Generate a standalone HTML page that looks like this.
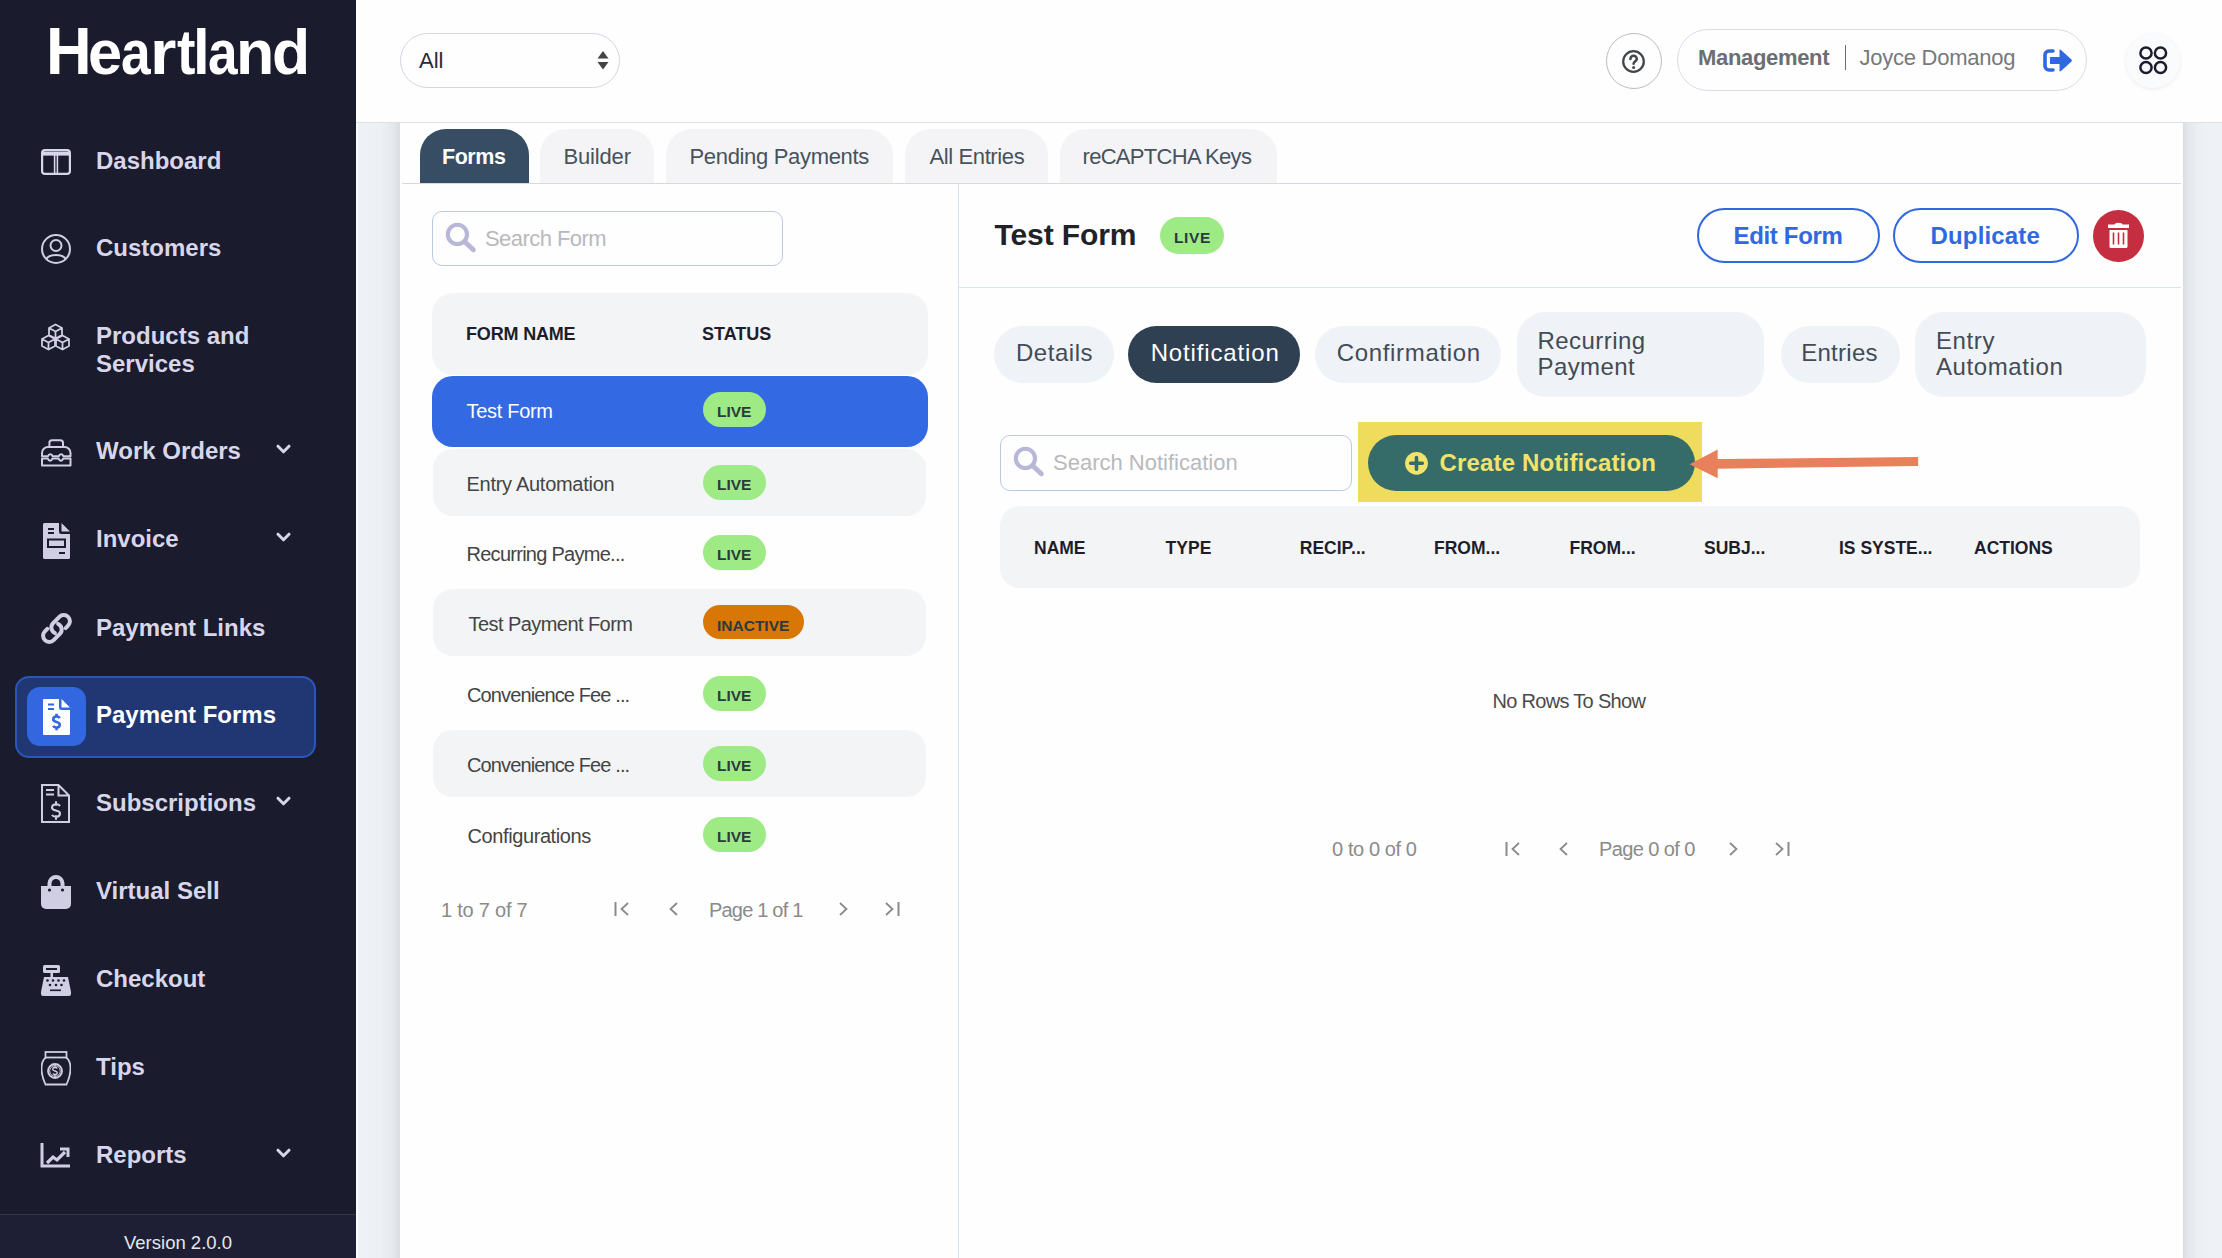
<!DOCTYPE html>
<html><head><meta charset="utf-8">
<style>
*{box-sizing:border-box;margin:0;padding:0}
html,body{width:2222px;height:1258px;overflow:hidden;background:#eef1f6;font-family:"Liberation Sans",sans-serif}
.abs{position:absolute}
.t{white-space:nowrap}
</style></head><body>

<div class="abs" style="left:356px;top:122px;width:44px;height:1136px;background:linear-gradient(to right,#fbfcfd 0,#fbfcfd 4%,#eef1f6 6%,#edf0f5 55%,#e4e7eb 85%,#d9dce0 100%)"></div>
<div class="abs" style="left:2183px;top:122px;width:39px;height:1136px;background:linear-gradient(to right,#d9dce1 0,#e3e6eb 12%,#ebeef3 35%,#eef1f6 60%)"></div>
<div class="abs" style="left:356px;top:0px;width:1866px;height:123px;background:#fefefe;border-bottom:1px solid #dde1e6"></div>
<div class="abs" style="left:400px;top:123px;width:1783px;height:1135px;background:#fefefe"></div>
<div class="abs" style="left:0px;top:0px;width:356px;height:1258px;background:#1a1b2d"></div>
<div class="t abs" style="left:45.92px;top:21.45px;font-size:63.5px;line-height:63.5px;color:#ffffff;font-weight:bold;transform:scale(0.995,1.055);transform-origin:0 53.75px">H</div>
<div class="t abs" style="left:87.98px;top:21.45px;font-size:63.5px;line-height:63.5px;color:#ffffff;font-weight:bold;transform:scale(0.967,1.0);transform-origin:0 53.75px">e</div>
<div class="t abs" style="left:120.90px;top:21.45px;font-size:63.5px;line-height:63.5px;color:#ffffff;font-weight:bold;transform:scale(0.840,1.0);transform-origin:0 53.75px">a</div>
<div class="t abs" style="left:150.22px;top:21.45px;font-size:63.5px;line-height:63.5px;color:#ffffff;font-weight:bold;transform:scale(1.067,1.0);transform-origin:0 53.75px">r</div>
<div class="t abs" style="left:176.60px;top:21.45px;font-size:63.5px;line-height:63.5px;color:#ffffff;font-weight:bold;transform:scale(0.872,1.0);transform-origin:0 53.75px">t</div>
<div class="t abs" style="left:193.35px;top:21.45px;font-size:63.5px;line-height:63.5px;color:#ffffff;font-weight:bold;transform:scale(0.943,1.0);transform-origin:0 53.75px">l</div>
<div class="t abs" style="left:207.91px;top:21.45px;font-size:63.5px;line-height:63.5px;color:#ffffff;font-weight:bold;transform:scale(0.837,1.0);transform-origin:0 53.75px">a</div>
<div class="t abs" style="left:236.25px;top:21.45px;font-size:63.5px;line-height:63.5px;color:#ffffff;font-weight:bold;transform:scale(0.987,1.0);transform-origin:0 53.75px">n</div>
<div class="t abs" style="left:271.84px;top:21.45px;font-size:63.5px;line-height:63.5px;color:#ffffff;font-weight:bold;transform:scale(0.984,1.0);transform-origin:0 53.75px">d</div>
<svg class="abs" style="left:41px;top:149px" width="30" height="26" viewBox="0 0 30 26" ><g fill="none" stroke="#d8d6ea" stroke-width="2.2"><rect x="1.1" y="1.1" width="27.8" height="23.8" rx="3"/><path d="M1 4.6H29" stroke-width="4"/><path d="M13.6 6V25M16.4 6V25" stroke-width="1.6"/></g></svg>
<div class="t abs" style="left:96.00px;top:148.68px;font-size:24px;line-height:24px;color:#d8d6ea;font-weight:bold;">Dashboard</div>
<svg class="abs" style="left:41px;top:234px" width="30" height="30" viewBox="0 0 30 30" ><g fill="none" stroke="#d0cee3" stroke-width="2"><circle cx="15" cy="15" r="14"/><circle cx="15" cy="11.5" r="5.5"/><path d="M5 25.5C8 19.5 22 19.5 25 25.5"/></g></svg>
<div class="t abs" style="left:96.00px;top:236.28px;font-size:24px;line-height:24px;color:#d8d6ea;font-weight:bold;">Customers</div>
<svg class="abs" style="left:40px;top:323px" width="31" height="28" viewBox="0 0 31 28" ><g fill="none" stroke="#d0cee3" stroke-width="1.8" stroke-linejoin="round"><path d="M15.5 1.5L22 5V12L15.5 15.5L9 12V5Z M9 5L15.5 8.5L22 5 M15.5 8.5V15.5"/><path d="M8.5 12.5L15 16V23L8.5 26.5L2 23V16Z M2 16L8.5 19.5L15 16 M8.5 19.5V26.5"/><path d="M22.5 12.5L29 16V23L22.5 26.5L16 23V16Z M16 16L22.5 19.5L29 16 M22.5 19.5V26.5"/></g></svg>
<div class="t abs" style="left:96.00px;top:324.28px;font-size:24px;line-height:24px;color:#d8d6ea;font-weight:bold;">Products and</div>
<div class="t abs" style="left:96.00px;top:351.98px;font-size:24px;line-height:24px;color:#d8d6ea;font-weight:bold;">Services</div>
<svg class="abs" style="left:41px;top:439px" width="31" height="28" viewBox="0 0 31 28" ><g fill="none" stroke="#d0cee3" stroke-width="2" stroke-linejoin="round"><path d="M8.4 8.2V3.8a2.6 2.6 0 0 1 2.6-2.6h8.4a2.6 2.6 0 0 1 2.6 2.6V8.2"/><path d="M1 17.3V14a6 6 0 0 1 6-6H23.5a6 6 0 0 1 6 6V17.3H22.4c-0.7-2.7-3.9-2.7-4.6 0H11.6c-0.7-2.7-3.9-2.7-4.6 0Z"/><path d="M1 19.6H6.8c0.7 2.7 3.9 2.7 4.6 0H17.6c0.7 2.7 3.9 2.7 4.6 0H29.5V26.5H1Z"/></g></svg>
<div class="t abs" style="left:96.00px;top:438.68px;font-size:24px;line-height:24px;color:#d8d6ea;font-weight:bold;">Work Orders</div>
<svg class="abs" style="left:276px;top:444px" width="15" height="10" viewBox="0 0 15 10" ><path d="M2 2.2L7.5 7.8L13 2.2" fill="none" stroke="#d8d6ea" stroke-width="3" stroke-linecap="round" stroke-linejoin="round"/></svg>
<svg class="abs" style="left:43px;top:523px" width="27" height="36" viewBox="0 0 27 36" ><path fill="#d0cee3" d="M0 1.5Q0 0 1.5 0H16V8.5a2.5 2.5 0 0 0 2.5 2.5H27V34.5Q27 36 25.5 36H1.5Q0 36 0 34.5Z M18.5 0L27 8.5H18.5Z"/><path stroke="#1a1b2d" stroke-width="2" fill="none" d="M5 6H11M5 10H11M16 30H22"/><rect x="5" y="16.5" width="17" height="7.5" fill="none" stroke="#1a1b2d" stroke-width="2"/></svg>
<div class="t abs" style="left:96.00px;top:527.18px;font-size:24px;line-height:24px;color:#d8d6ea;font-weight:bold;">Invoice</div>
<svg class="abs" style="left:276px;top:532px" width="15" height="10" viewBox="0 0 15 10" ><path d="M2 2.2L7.5 7.8L13 2.2" fill="none" stroke="#d8d6ea" stroke-width="3" stroke-linecap="round" stroke-linejoin="round"/></svg>
<svg class="abs" style="left:39.5px;top:612px" width="33" height="33" viewBox="0 0 24 24"><path fill="none" stroke="#d0cee3" stroke-width="2.9" stroke-linecap="round" stroke-linejoin="round" d="M13.19 8.688a4.5 4.5 0 0 1 1.242 7.244l-4.5 4.5a4.5 4.5 0 0 1-6.364-6.364l1.757-1.757m13.35-.622 1.757-1.757a4.5 4.5 0 0 0-6.364-6.364l-4.5 4.5a4.5 4.5 0 0 0 1.242 7.244"/></svg>
<div class="t abs" style="left:96.00px;top:615.68px;font-size:24px;line-height:24px;color:#d8d6ea;font-weight:bold;">Payment Links</div>
<div class="abs" style="left:15px;top:675.5px;width:301px;height:82.0px;background:#213773;border:2px solid #2a55bd;border-radius:14px"></div>
<div class="abs" style="left:27px;top:687px;width:59px;height:59px;background:#3267e0;border-radius:13px"></div>
<svg class="abs" style="left:42.5px;top:698.5px" width="27" height="36" viewBox="0 0 27 36" ><path fill="#fff" d="M0 1Q0 0 1 0H16V8.5a2.5 2.5 0 0 0 2.5 2.5H27V35Q27 36 26 36H1Q0 36 0 35Z M18.5 0L27 8.5H18.5Z"/><path stroke="#3267e0" stroke-width="2.2" fill="none" d="M5 5.5H11M5 10H11"/><path fill="none" stroke="#3267e0" stroke-width="2.6" stroke-linecap="butt" d="M16.75 19.15C15.78 17.05 10.25 16.35 10.25 20.55C10.25 23.70 16.75 22.30 16.75 25.45C16.75 29.65 11.22 28.95 10.25 26.85M13.50 14.80V18.80M13.50 27.20V31.20"/></svg>
<div class="t abs" style="left:96.00px;top:703.18px;font-size:24px;line-height:24px;color:#ffffff;font-weight:bold;">Payment Forms</div>
<svg class="abs" style="left:41px;top:784px" width="29" height="39" viewBox="0 0 29 39" ><g fill="none" stroke="#d0cee3" stroke-width="2"><path d="M1 1H17.5L28 11.5V38H1Z M17.5 1V11.5H28"/><path d="M5 6H13M5 10.5H13" stroke-width="2.2"/></g><path fill="none" stroke="#d0cee3" stroke-width="2.1" stroke-linecap="butt" d="M19.00 22.10C17.80 19.70 11.00 18.90 11.00 23.70C11.00 27.30 19.00 25.70 19.00 29.30C19.00 34.10 12.20 33.30 11.00 30.90M15.00 17.30V21.70M15.00 31.30V35.70"/></svg>
<div class="t abs" style="left:96.00px;top:791.18px;font-size:24px;line-height:24px;color:#d8d6ea;font-weight:bold;">Subscriptions</div>
<svg class="abs" style="left:276px;top:796px" width="15" height="10" viewBox="0 0 15 10" ><path d="M2 2.2L7.5 7.8L13 2.2" fill="none" stroke="#d8d6ea" stroke-width="3" stroke-linecap="round" stroke-linejoin="round"/></svg>
<svg class="abs" style="left:41px;top:875px" width="30" height="34" viewBox="0 0 30 34" ><path d="M8.5 12V8.5a6.5 6.5 0 0 1 13 0V12" fill="none" stroke="#d0cee3" stroke-width="4"/><path fill="#d0cee3" d="M0 11H30V29a5 5 0 0 1-5 5H5a5 5 0 0 1-5-5Z"/><circle cx="8.5" cy="15" r="1.6" fill="#1a1b2d"/><circle cx="21.5" cy="15" r="1.6" fill="#1a1b2d"/></svg>
<div class="t abs" style="left:96.00px;top:879.18px;font-size:24px;line-height:24px;color:#d8d6ea;font-weight:bold;">Virtual Sell</div>
<svg class="abs" style="left:41px;top:965px" width="30" height="31" viewBox="0 0 30 31" ><rect x="2" y="0" width="17" height="8" rx="1.5" fill="#d0cee3"/><rect x="5" y="3" width="11" height="2" fill="#1a1b2d"/><rect x="9.5" y="8" width="2.5" height="5" fill="#d0cee3"/><path fill="#d0cee3" d="M3 12H27L30 27V29a2 2 0 0 1-2 2H2a2 2 0 0 1-2-2V27Z"/><g fill="#1a1b2d"><circle cx="6.5" cy="15.5" r="1.3"/><circle cx="12" cy="15.5" r="1.3"/><circle cx="17.5" cy="15.5" r="1.3"/><circle cx="23" cy="15.5" r="1.3"/><circle cx="9" cy="20" r="1.3"/><circle cx="15" cy="20" r="1.3"/><circle cx="20.5" cy="20" r="1.3"/><rect x="9" y="24.5" width="11" height="1.6"/></g></svg>
<div class="t abs" style="left:96.00px;top:967.18px;font-size:24px;line-height:24px;color:#d8d6ea;font-weight:bold;">Checkout</div>
<svg class="abs" style="left:41px;top:1051px" width="30" height="35" viewBox="0 0 30 35" ><g fill="none" stroke="#d0cee3" stroke-width="1.8"><rect x="4.5" y="1" width="21" height="5.5"/><path d="M5 6.5C1 9 0.5 13 0.5 17.5C0.5 23 2 28 4.5 33.5H25.5C28 28 29.5 23 29.5 17.5C29.5 13 29 9 25 6.5"/><circle cx="14" cy="20" r="7"/><circle cx="14" cy="20" r="5.3" stroke-width="1"/></g><path fill="none" stroke="#d0cee3" stroke-width="1.4" stroke-linecap="butt" d="M16.25 17.52C15.57 16.18 11.75 15.73 11.75 18.43C11.75 20.45 16.25 19.55 16.25 21.57C16.25 24.27 12.43 23.82 11.75 22.48M14.00 14.30V17.30M14.00 22.70V25.70"/></svg>
<div class="t abs" style="left:96.00px;top:1055.18px;font-size:24px;line-height:24px;color:#d8d6ea;font-weight:bold;">Tips</div>
<svg class="abs" style="left:40px;top:1143px" width="31" height="25" viewBox="0 0 31 25" ><g fill="none" stroke="#d0cee3" stroke-width="3"><path d="M2 0V23H30"/><path d="M7 20L13 14L17 17L25 9" stroke-width="3.2"/><path d="M20 6H28V14"/></g></svg>
<div class="t abs" style="left:96.00px;top:1143.18px;font-size:24px;line-height:24px;color:#d8d6ea;font-weight:bold;">Reports</div>
<svg class="abs" style="left:276px;top:1148px" width="15" height="10" viewBox="0 0 15 10" ><path d="M2 2.2L7.5 7.8L13 2.2" fill="none" stroke="#d8d6ea" stroke-width="3" stroke-linecap="round" stroke-linejoin="round"/></svg>
<div class="abs" style="left:0px;top:1214px;width:356px;height:44px;background:#1e1f34;border-top:1px solid #36383f"></div>
<div class="t abs" style="left:0;top:1233.5px;width:356px;text-align:center;font-size:18.5px;line-height:18.5px;color:#e6e6ef">Version 2.0.0</div>
<div class="abs" style="left:400px;top:33px;width:220px;height:55px;border:1.5px solid #d6d4e7;border-radius:28px;background:#fefefe"></div>
<div class="t abs" style="left:419.00px;top:50.38px;font-size:22px;line-height:22px;color:#2b2b35;font-weight:normal;">All</div>
<svg class="abs" style="left:597px;top:50px" width="12" height="20" viewBox="0 0 12 20" ><path fill="#444" d="M0.5 8.5L6 1L11.5 8.5Z M0.5 12L11.5 12L6 19.5Z"/></svg>
<div class="abs" style="left:1606px;top:32.5px;width:56px;height:56.0px;border:1.8px solid #b9bdc0;border-radius:50%"></div>
<svg class="abs" style="left:1621px;top:49px" width="25" height="25" viewBox="0 0 25 25" ><circle cx="12.5" cy="12.5" r="10.3" fill="none" stroke="#41464a" stroke-width="2.3"/><path d="M9.4 10a3.2 3.2 0 0 1 6.4 0c0 2.2-3.2 2.4-3.2 4.8" fill="none" stroke="#41464a" stroke-width="2.5" stroke-linecap="round"/><circle cx="12.6" cy="18.4" r="1.5" fill="#41464a"/></svg>
<div class="abs" style="left:1677px;top:29px;width:410px;height:62px;border:1.5px solid #dcdaea;border-radius:31px"></div>
<div class="t abs" style="left:1698.00px;top:47.38px;font-size:22px;line-height:22px;color:#6b6e72;font-weight:bold;letter-spacing:-0.33px;">Management</div>
<div class="abs" style="left:1844.5px;top:45px;width:1.5px;height:25px;background:#6a6d72"></div>
<div class="t abs" style="left:1859.50px;top:47.38px;font-size:22px;line-height:22px;color:#76797c;font-weight:normal;letter-spacing:-0.25px;">Joyce Domanog</div>
<svg class="abs" style="left:2042px;top:48px" width="31" height="25" viewBox="0 0 31 25" ><path d="M11 3H7a4 4 0 0 0-4 4V18a4 4 0 0 0 4 4H11" fill="none" stroke="#3068e2" stroke-width="3.6" stroke-linecap="round"/><path fill="#3068e2" d="M8 9H17.5V2.5Q17.5 0.8 19 2L29.5 11.5Q30.3 12.5 29.5 13.5L19 23Q17.5 24.2 17.5 22.5V16H8Z"/></svg>
<div class="abs" style="left:2126px;top:34px;width:54px;height:54px;background:#fafbfc;border-radius:50%;box-shadow:0 1px 4px rgba(0,0,0,0.08)"></div>
<svg class="abs" style="left:2137px;top:45px" width="32" height="32" viewBox="0 0 32 32" ><g fill="none" stroke="#1b1d2e" stroke-width="2.5"><circle cx="9" cy="8" r="5.6"/><circle cx="23.5" cy="8" r="5.6"/><circle cx="9" cy="22.5" r="5.6"/><circle cx="23.5" cy="22.5" r="5.6"/></g></svg>
<div class="abs" style="left:402px;top:183px;width:1779px;height:1px;background:#d5dae0"></div>
<div class="abs" style="left:420px;top:129px;width:109px;height:54px;background:#364d63;border-radius:26px 26px 0 0"></div>
<div class="t abs" style="left:442.00px;top:146.50px;font-size:21.5px;line-height:21.5px;color:#ffffff;font-weight:bold;letter-spacing:-0.45px;">Forms</div>
<div class="abs" style="left:540px;top:129px;width:114px;height:54px;background:#f4f4f6;border-radius:26px 26px 0 0"></div>
<div class="t abs" style="left:563.50px;top:146.08px;font-size:22px;line-height:22px;color:#47525e;font-weight:normal;letter-spacing:-0.17px;">Builder</div>
<div class="abs" style="left:666px;top:129px;width:227px;height:54px;background:#f4f4f6;border-radius:26px 26px 0 0"></div>
<div class="t abs" style="left:689.50px;top:146.08px;font-size:22px;line-height:22px;color:#47525e;font-weight:normal;letter-spacing:-0.33px;">Pending Payments</div>
<div class="abs" style="left:905px;top:129px;width:143px;height:54px;background:#f4f4f6;border-radius:26px 26px 0 0"></div>
<div class="t abs" style="left:929.50px;top:146.08px;font-size:22px;line-height:22px;color:#47525e;font-weight:normal;letter-spacing:-0.39px;">All Entries</div>
<div class="abs" style="left:1060px;top:129px;width:217px;height:54px;background:#f4f4f6;border-radius:26px 26px 0 0"></div>
<div class="t abs" style="left:1082.50px;top:146.08px;font-size:22px;line-height:22px;color:#47525e;font-weight:normal;letter-spacing:-0.7px;">reCAPTCHA Keys</div>
<div class="abs" style="left:958px;top:184px;width:1px;height:1074px;background:#d9e2ee"></div>
<div class="abs" style="left:432px;top:211px;width:351px;height:55px;border:1.5px solid #b9cbe0;border-radius:10px"></div>
<svg class="abs" style="left:445px;top:222px" width="32" height="32" viewBox="0 0 32 32" ><circle cx="12.4" cy="12.4" r="9.6" fill="none" stroke="#b8b7d8" stroke-width="4.1"/><path d="M19.5 19.5L28.3 27.8" stroke="#b8b7d8" stroke-width="5" stroke-linecap="round"/></svg>
<div class="t abs" style="left:485.00px;top:227.98px;font-size:22px;line-height:22px;color:#b9b9bc;font-weight:normal;letter-spacing:-0.56px;">Search Form</div>
<div class="abs" style="left:431.5px;top:292.5px;width:496.0px;height:82.5px;background:#f3f4f5;border-radius:21px"></div>
<div class="t abs" style="left:466.00px;top:325.16px;font-size:18px;line-height:18px;color:#1d1d2b;font-weight:bold;letter-spacing:-0.17px;">FORM NAME</div>
<div class="t abs" style="left:702.00px;top:325.16px;font-size:18px;line-height:18px;color:#1d1d2b;font-weight:bold;">STATUS</div>
<div class="abs" style="left:431.5px;top:376px;width:496.0px;height:71px;background:#3369e3;border-radius:21px"></div>
<div class="t abs" style="left:466.50px;top:400.57px;font-size:20px;line-height:20px;color:#ffffff;font-weight:normal;letter-spacing:-0.3px;">Test Form</div>
<div class="abs" style="left:703px;top:392px;width:63px;height:34.5px;background:#9eea84;border-radius:18px"></div>
<div class="t abs" style="left:717.00px;top:403.88px;font-size:15.5px;line-height:15.5px;color:#2c3a3f;font-weight:bold;">LIVE</div>
<div class="abs" style="left:433px;top:449px;width:493px;height:67px;background:#f3f4f5;border-radius:20px"></div>
<div class="t abs" style="left:466.50px;top:473.57px;font-size:20px;line-height:20px;color:#444444;font-weight:normal;letter-spacing:-0.28px;">Entry Automation</div>
<div class="abs" style="left:703px;top:465px;width:63px;height:34.5px;background:#9eea84;border-radius:18px"></div>
<div class="t abs" style="left:717.00px;top:476.88px;font-size:15.5px;line-height:15.5px;color:#2c3a3f;font-weight:bold;">LIVE</div>
<div class="t abs" style="left:466.50px;top:543.57px;font-size:20px;line-height:20px;color:#444444;font-weight:normal;letter-spacing:-0.73px;">Recurring Payme...</div>
<div class="abs" style="left:703px;top:535px;width:63px;height:34.5px;background:#9eea84;border-radius:18px"></div>
<div class="t abs" style="left:717.00px;top:546.88px;font-size:15.5px;line-height:15.5px;color:#2c3a3f;font-weight:bold;">LIVE</div>
<div class="abs" style="left:433px;top:589px;width:493px;height:67px;background:#f3f4f5;border-radius:20px"></div>
<div class="t abs" style="left:468.50px;top:613.57px;font-size:20px;line-height:20px;color:#444444;font-weight:normal;letter-spacing:-0.56px;">Test Payment Form</div>
<div class="abs" style="left:703px;top:605px;width:101px;height:34px;background:#d97706;border-radius:18px"></div>
<div class="t abs" style="left:717.00px;top:617.88px;font-size:15.5px;line-height:15.5px;color:#2c3a3f;font-weight:bold;">INACTIVE</div>
<div class="t abs" style="left:467.00px;top:684.57px;font-size:20px;line-height:20px;color:#444444;font-weight:normal;letter-spacing:-0.88px;">Convenience Fee ...</div>
<div class="abs" style="left:703px;top:676px;width:63px;height:34.5px;background:#9eea84;border-radius:18px"></div>
<div class="t abs" style="left:717.00px;top:687.88px;font-size:15.5px;line-height:15.5px;color:#2c3a3f;font-weight:bold;">LIVE</div>
<div class="abs" style="left:433px;top:730px;width:493px;height:67px;background:#f3f4f5;border-radius:20px"></div>
<div class="t abs" style="left:467.00px;top:754.57px;font-size:20px;line-height:20px;color:#444444;font-weight:normal;letter-spacing:-0.88px;">Convenience Fee ...</div>
<div class="abs" style="left:703px;top:746px;width:63px;height:34.5px;background:#9eea84;border-radius:18px"></div>
<div class="t abs" style="left:717.00px;top:757.88px;font-size:15.5px;line-height:15.5px;color:#2c3a3f;font-weight:bold;">LIVE</div>
<div class="t abs" style="left:467.50px;top:825.57px;font-size:20px;line-height:20px;color:#444444;font-weight:normal;letter-spacing:-0.4px;">Configurations</div>
<div class="abs" style="left:703px;top:817px;width:63px;height:34.5px;background:#9eea84;border-radius:18px"></div>
<div class="t abs" style="left:717.00px;top:828.88px;font-size:15.5px;line-height:15.5px;color:#2c3a3f;font-weight:bold;">LIVE</div>
<div class="t abs" style="left:441.00px;top:900.07px;font-size:20px;line-height:20px;color:#8a8a8a;font-weight:normal;letter-spacing:-0.23px;">1 to 7 of 7</div>
<svg class="abs" style="left:614px;top:901px" width="16" height="16" viewBox="0 0 16 16" ><path d="M1.5 1V15" stroke="#8a8a8a" stroke-width="2"/><path d="M14 2L7.5 8L14 14" fill="none" stroke="#8a8a8a" stroke-width="1.8"/></svg>
<svg class="abs" style="left:668px;top:901px" width="11" height="16" viewBox="0 0 11 16" ><path d="M9 2L2.5 8L9 14" fill="none" stroke="#8a8a8a" stroke-width="1.8"/></svg>
<svg class="abs" style="left:838px;top:901px" width="11" height="16" viewBox="0 0 11 16" ><path d="M2 2L8.5 8L2 14" fill="none" stroke="#8a8a8a" stroke-width="1.8"/></svg>
<svg class="abs" style="left:884px;top:901px" width="16" height="16" viewBox="0 0 16 16" ><path d="M14.5 1V15" stroke="#8a8a8a" stroke-width="2"/><path d="M2 2L8.5 8L2 14" fill="none" stroke="#8a8a8a" stroke-width="1.8"/></svg>
<div class="t abs" style="left:709.00px;top:900.07px;font-size:20px;line-height:20px;color:#8a8a8a;font-weight:normal;letter-spacing:-0.8px;">Page 1 of 1</div>
<div class="t abs" style="left:994.50px;top:220.10px;font-size:30px;line-height:30px;color:#222226;font-weight:bold;letter-spacing:-0.1px;">Test Form</div>
<div class="abs" style="left:1160px;top:217px;width:64px;height:37px;background:#9eea84;border-radius:19px"></div>
<div class="t abs" style="left:1174.00px;top:229.58px;font-size:15.5px;line-height:15.5px;color:#2c3a3f;font-weight:bold;letter-spacing:0.6px;">LIVE</div>
<div class="abs" style="left:959px;top:287px;width:1222px;height:1px;background:#dde3ea"></div>
<div class="abs" style="left:1697px;top:208px;width:183px;height:55px;border:2.5px solid #3068e0;border-radius:28px"></div>
<div class="t abs" style="left:1733.50px;top:223.98px;font-size:24px;line-height:24px;color:#3068e0;font-weight:bold;letter-spacing:-0.33px;">Edit Form</div>
<div class="abs" style="left:1893px;top:208px;width:186px;height:55px;border:2.5px solid #3068e0;border-radius:28px"></div>
<div class="t abs" style="left:1930.50px;top:223.98px;font-size:24px;line-height:24px;color:#3068e0;font-weight:bold;letter-spacing:0.16px;">Duplicate</div>
<div class="abs" style="left:2093px;top:210px;width:51px;height:52px;background:#c52d40;border-radius:50%"></div>
<svg class="abs" style="left:2107px;top:222px" width="23" height="27" viewBox="0 0 23 27" ><path fill="#fff" d="M1 2.5H7.5Q8 0.8 11.5 0.8Q15 0.8 15.5 2.5H22V6H1Z"/><path fill="#fff" d="M2.5 8H20.5V24.5Q20.5 26 19 26H4Q2.5 26 2.5 24.5Z"/><path stroke="#c52d40" stroke-width="1.6" d="M6.5 10.5V22.5M11.5 10.5V22.5M16.5 10.5V22.5"/></svg>
<div class="abs" style="left:994px;top:326px;width:120px;height:57px;background:#eff2f7;border-radius:28.5px"></div>
<div class="t abs" style="left:1015.90px;top:341.28px;font-size:24px;line-height:24px;color:#434b55;font-weight:normal;letter-spacing:0.55px;">Details</div>
<div class="abs" style="left:1128px;top:326px;width:172px;height:57px;background:#2e4051;border-radius:28.5px"></div>
<div class="t abs" style="left:1150.70px;top:341.28px;font-size:24px;line-height:24px;color:#ffffff;font-weight:normal;letter-spacing:0.85px;">Notification</div>
<div class="abs" style="left:1314.5px;top:326px;width:186.5px;height:57px;background:#eff2f7;border-radius:28.5px"></div>
<div class="t abs" style="left:1336.70px;top:341.28px;font-size:24px;line-height:24px;color:#434b55;font-weight:normal;letter-spacing:0.68px;">Confirmation</div>
<div class="abs" style="left:1517px;top:312px;width:247px;height:85px;background:#eff2f7;border-radius:28.5px"></div>
<div class="t abs" style="left:1537.50px;top:329.38px;font-size:24px;line-height:24px;color:#434b55;font-weight:normal;letter-spacing:0.45px;">Recurring</div>
<div class="t abs" style="left:1537.50px;top:355.28px;font-size:24px;line-height:24px;color:#434b55;font-weight:normal;letter-spacing:0.4px;">Payment</div>
<div class="abs" style="left:1780.5px;top:326px;width:119.0px;height:57px;background:#eff2f7;border-radius:28.5px"></div>
<div class="t abs" style="left:1801.20px;top:341.28px;font-size:24px;line-height:24px;color:#434b55;font-weight:normal;letter-spacing:0.28px;">Entries</div>
<div class="abs" style="left:1915px;top:312px;width:230.5px;height:85px;background:#eff2f7;border-radius:28.5px"></div>
<div class="t abs" style="left:1936.00px;top:329.38px;font-size:24px;line-height:24px;color:#434b55;font-weight:normal;letter-spacing:0.6px;">Entry</div>
<div class="t abs" style="left:1936.00px;top:355.28px;font-size:24px;line-height:24px;color:#434b55;font-weight:normal;letter-spacing:0.6px;">Automation</div>
<div class="abs" style="left:1000px;top:435px;width:352px;height:56px;border:1.5px solid #b9cbe0;border-radius:10px"></div>
<svg class="abs" style="left:1013px;top:446px" width="32" height="32" viewBox="0 0 32 32" ><circle cx="12.4" cy="12.4" r="9.6" fill="none" stroke="#b8b7d8" stroke-width="4.1"/><path d="M19.5 19.5L28.3 27.8" stroke="#b8b7d8" stroke-width="5" stroke-linecap="round"/></svg>
<div class="t abs" style="left:1053.00px;top:451.78px;font-size:22px;line-height:22px;color:#b9b9bc;font-weight:normal;">Search Notification</div>
<div class="abs" style="left:1358px;top:422px;width:344px;height:80px;background:#f0dc5c"></div>
<div class="abs" style="left:1367.5px;top:435px;width:327.5px;height:56px;background:#356c6a;border-radius:28px"></div>
<svg class="abs" style="left:1404px;top:451px" width="25" height="25" viewBox="0 0 25 25" ><circle cx="12.5" cy="12.3" r="11.4" fill="#f3e36c"/><path d="M12.5 6.6V18.2M6.7 12.3H18.3" stroke="#356c6a" stroke-width="3.6" stroke-linecap="round"/></svg>
<div class="t abs" style="left:1439.50px;top:451.38px;font-size:24px;line-height:24px;color:#f3e36c;font-weight:bold;letter-spacing:0.17px;">Create Notification</div>
<svg class="abs" style="left:1688px;top:448px" width="232" height="32" viewBox="0 0 232 32" ><path fill="#e8805c" d="M1.6 16.2L29.7 1.6V11.1L230.1 8.9V17.9L29.7 20.7V30.2Z"/></svg>
<div class="abs" style="left:1000px;top:506px;width:1140px;height:82px;background:#f3f4f5;border-radius:20px"></div>
<div class="t abs" style="left:1034.00px;top:539.99px;font-size:17.5px;line-height:17.5px;color:#1d1d2b;font-weight:bold;">NAME</div>
<div class="t abs" style="left:1165.60px;top:539.99px;font-size:17.5px;line-height:17.5px;color:#1d1d2b;font-weight:bold;">TYPE</div>
<div class="t abs" style="left:1299.80px;top:539.99px;font-size:17.5px;line-height:17.5px;color:#1d1d2b;font-weight:bold;">RECIP...</div>
<div class="t abs" style="left:1434.00px;top:539.99px;font-size:17.5px;line-height:17.5px;color:#1d1d2b;font-weight:bold;">FROM...</div>
<div class="t abs" style="left:1569.50px;top:539.99px;font-size:17.5px;line-height:17.5px;color:#1d1d2b;font-weight:bold;">FROM...</div>
<div class="t abs" style="left:1704.00px;top:539.99px;font-size:17.5px;line-height:17.5px;color:#1d1d2b;font-weight:bold;">SUBJ...</div>
<div class="t abs" style="left:1839.00px;top:539.99px;font-size:17.5px;line-height:17.5px;color:#1d1d2b;font-weight:bold;">IS SYSTE...</div>
<div class="t abs" style="left:1974.00px;top:539.99px;font-size:17.5px;line-height:17.5px;color:#1d1d2b;font-weight:bold;">ACTIONS</div>
<div class="t abs" style="left:1492.50px;top:690.57px;font-size:20px;line-height:20px;color:#4a4a4a;font-weight:normal;letter-spacing:-0.69px;">No Rows To Show</div>
<div class="t abs" style="left:1332.00px;top:839.27px;font-size:20px;line-height:20px;color:#8a8a8a;font-weight:normal;letter-spacing:-0.4px;">0 to 0 of 0</div>
<svg class="abs" style="left:1505px;top:841px" width="16" height="16" viewBox="0 0 16 16" ><path d="M1.5 1V15" stroke="#8a8a8a" stroke-width="2"/><path d="M14 2L7.5 8L14 14" fill="none" stroke="#8a8a8a" stroke-width="1.8"/></svg>
<svg class="abs" style="left:1558px;top:841px" width="11" height="16" viewBox="0 0 11 16" ><path d="M9 2L2.5 8L9 14" fill="none" stroke="#8a8a8a" stroke-width="1.8"/></svg>
<svg class="abs" style="left:1728px;top:841px" width="11" height="16" viewBox="0 0 11 16" ><path d="M2 2L8.5 8L2 14" fill="none" stroke="#8a8a8a" stroke-width="1.8"/></svg>
<svg class="abs" style="left:1774px;top:841px" width="16" height="16" viewBox="0 0 16 16" ><path d="M14.5 1V15" stroke="#8a8a8a" stroke-width="2"/><path d="M2 2L8.5 8L2 14" fill="none" stroke="#8a8a8a" stroke-width="1.8"/></svg>
<div class="t abs" style="left:1599.00px;top:839.27px;font-size:20px;line-height:20px;color:#8a8a8a;font-weight:normal;letter-spacing:-0.6px;">Page 0 of 0</div>
</body></html>
